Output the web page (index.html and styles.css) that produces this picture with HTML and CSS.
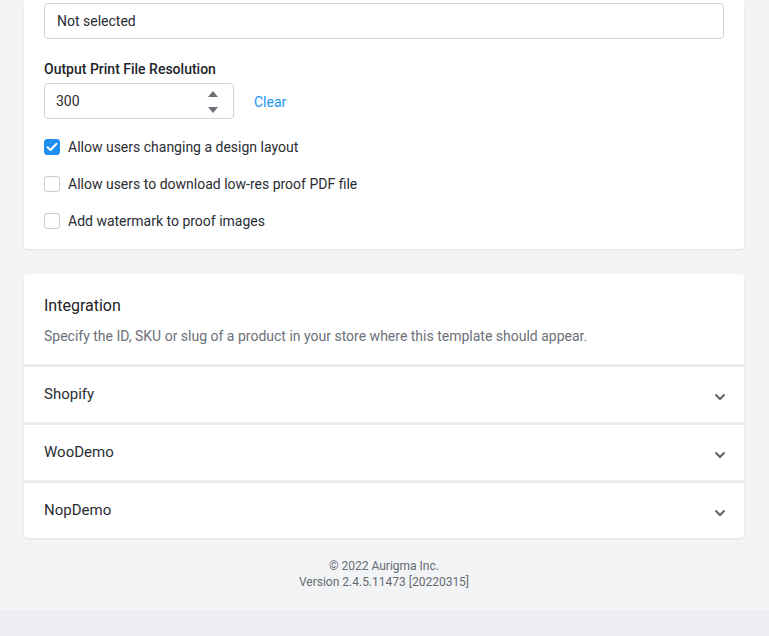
FILE: index.html
```html
<!DOCTYPE html>
<html>
<head>
<meta charset="utf-8">
<link rel="stylesheet" href="styles.css">
</head>
<body>
<div class="page">
  <div class="card card-settings">
    <div class="field">
      <div class="select">Not selected</div>
    </div>
    <div class="field">
      <label class="label">Output Print File Resolution</label>
      <div class="number-row">
        <div class="number">
          <span class="number-value">300</span>
          <span class="spinner">
            <svg width="10" height="22" viewBox="0 0 10 22"><path d="M0 6 L5 0 L10 6 Z" fill="#6b6f76"/><path d="M0 16 L10 16 L5 22 Z" fill="#6b6f76"/></svg>
          </span>
        </div>
        <a class="clear">Clear</a>
      </div>
    </div>
    <div class="checks">
      <div class="check"><span class="box checked"><svg width="12" height="10" viewBox="0 0 12 10"><path d="M1.5 5.2 L4.5 8 L10.5 1.8" fill="none" stroke="#fff" stroke-width="2" stroke-linecap="round" stroke-linejoin="round"/></svg></span>Allow users changing a design layout</div>
      <div class="check"><span class="box"></span>Allow users to download low-res proof PDF file</div>
      <div class="check"><span class="box"></span>Add watermark to proof images</div>
    </div>
  </div>

  <div class="card card-integration">
    <div class="int-head">
      <div class="int-title">Integration</div>
      <div class="int-desc">Specify the ID, SKU or slug of a product in your store where this template should appear.</div>
    </div>
    <div class="acc-row"><span>Shopify</span><svg class="chev" width="12" height="8" viewBox="0 0 12 8"><path d="M1.5 1.5 L6 6 L10.5 1.5" fill="none" stroke="#5f636b" stroke-width="2"/></svg></div>
    <div class="acc-row"><span>WooDemo</span><svg class="chev" width="12" height="8" viewBox="0 0 12 8"><path d="M1.5 1.5 L6 6 L10.5 1.5" fill="none" stroke="#5f636b" stroke-width="2"/></svg></div>
    <div class="acc-row"><span>NopDemo</span><svg class="chev" width="12" height="8" viewBox="0 0 12 8"><path d="M1.5 1.5 L6 6 L10.5 1.5" fill="none" stroke="#5f636b" stroke-width="2"/></svg></div>
  </div>

  <div class="footer">
    <div>© 2022 Aurigma Inc.</div>
    <div>Version 2.4.5.11473 [20220315]</div>
  </div>
</div>
<div class="band"></div>
</body>
</html>
```

FILE: styles.css
```css
html, body {
  margin: 0;
  padding: 0;
}
body {
  background: #f3f4f6;
  font-family: Roboto, "Liberation Sans", Arial, sans-serif;
  color: #2a2d33;
  font-size: 14px;
}
.page {
  padding: 0 25px 0 24px;
}
.card {
  background: #fff;
  border-radius: 4px;
  box-shadow: 0 1px 2px rgba(0, 0, 0, 0.08);
}
.card-settings {
  padding: 3px 20px 18px 20px;
  border-top-left-radius: 0;
  border-top-right-radius: 0;
}
.field {
  margin-bottom: 20px;
}
.select {
  height: 34px;
  border: 1px solid #cfd3d8;
  border-radius: 4px;
  padding: 0 12px;
  display: flex;
  align-items: center;
  line-height: 20px;
}
.label {
  display: block;
  font-size: 14px;
  font-weight: 500;
  line-height: 20px;
  margin-bottom: 4px;
  color: #23262b;
}
.number-row {
  display: flex;
  align-items: center;
  gap: 20px;
}
.number {
  width: 162px;
  height: 34px;
  border: 1px solid #cfd3d8;
  border-radius: 4px;
  padding: 0 15px 0 11px;
  display: flex;
  align-items: center;
  justify-content: space-between;
}
.spinner {
  display: flex;
  align-items: center;
  padding-top: 1px;
}
.spinner svg {
  display: block;
}
.clear {
  color: #2196f3;
  font-size: 14px;
  cursor: pointer;
  padding-top: 2px;
}
.field:nth-child(2) {
  margin-bottom: 18px;
}
.checks {
  display: flex;
  flex-direction: column;
  gap: 17px;
}
.check {
  display: flex;
  align-items: center;
  line-height: 20px;
  gap: 8px;
}
.box {
  width: 14px;
  height: 14px;
  border: 1px solid #c9cdd3;
  border-radius: 3px;
  display: flex;
  align-items: center;
  justify-content: center;
  flex: none;
}
.box.checked {
  background: #1f8ef1;
  border-color: #1f8ef1;
}
.card-integration {
  margin-top: 25px;
  overflow: hidden;
}
.int-head {
  padding: 20px 20px 18px 20px;
}
.int-title {
  font-size: 16px;
  font-weight: 400;
  line-height: 22px;
  color: #1f2227;
  padding-top: 1px;
  margin-bottom: -1px;
}
.int-desc {
  margin-top: 10px;
  line-height: 20px;
  color: #6b7079;
}
.acc-row {
  border-top: 3px solid #ebebec;
  height: 55px;
  padding: 0 18px 0 20px;
  display: flex;
  align-items: center;
  justify-content: space-between;
  font-size: 15px;
  color: #2a2d33;
}
.acc-row span {
  margin-top: -2px;
}
.chev {
  margin-top: 4px;
}
.footer {
  padding: 20px 0 20px 0;
  text-align: center;
  font-size: 12px;
  line-height: 16px;
  color: #666b72;
}
.band {
  height: 26px;
  background: #eceef1;
}
```
